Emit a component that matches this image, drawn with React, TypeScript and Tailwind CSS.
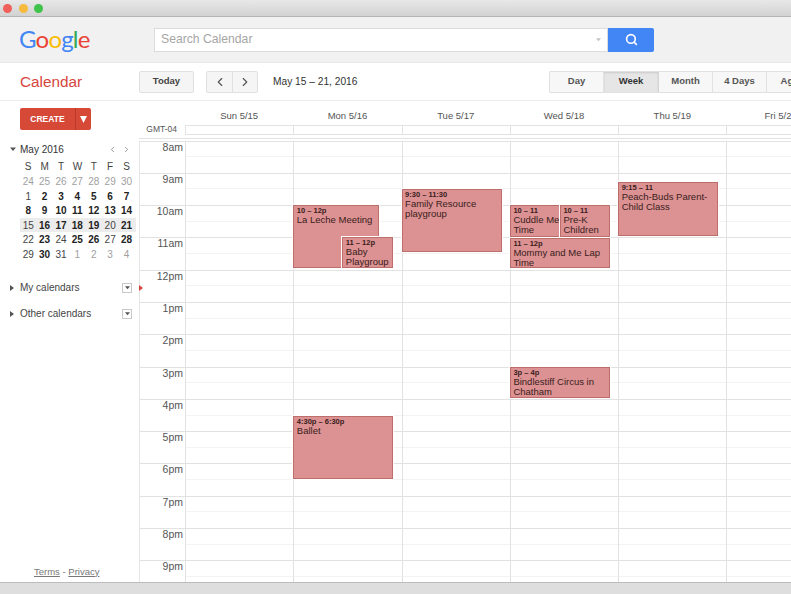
import { ChevronLeft, ChevronRight, Search } from "lucide-react";

const hours = ["8am","9am","10am","11am","12pm","1pm","2pm","3pm","4pm","5pm","6pm","7pm","8pm","9pm"];
const days = ["Sun 5/15","Mon 5/16","Tue 5/17","Wed 5/18","Thu 5/19","Fri 5/20","Sat 5/21"];

type Ev = { time: string; title: string; pos: string };
const events: Ev[][] = [
  [],
  [
    { time: "10 – 12p", title: "La Leche Meeting", pos: "left-[-1px] top-[64.5px] w-[86px] h-[63px]" },
    { time: "11 – 12p", title: "Baby Playgroup", pos: "left-[48px] top-[96.5px] w-[51px] h-[31px]" },
    { time: "4:30p – 6:30p", title: "Ballet", pos: "left-[-1px] top-[275.5px] w-[100px] h-[63px]" },
  ],
  [
    { time: "9:30 – 11:30", title: "Family Resource playgroup", pos: "left-[-1px] top-[48.5px] w-[100px] h-[63px]" },
  ],
  [
    { time: "10 – 11", title: "Cuddle\u00a0Me Time", pos: "left-[-1px] top-[64.5px] w-[50px] h-[32px]" },
    { time: "10 – 11", title: "Pre-K Children", pos: "left-[49px] top-[64.5px] w-[50px] h-[32px]" },
    { time: "11 – 12p", title: "Mommy and Me Lap Time", pos: "left-[-1px] top-[97.5px] w-[100px] h-[30px]" },
    { time: "3p – 4p", title: "Bindlestiff Circus in Chatham", pos: "left-[-1px] top-[226.5px] w-[100px] h-[31px]" },
  ],
  [
    { time: "9:15 – 11", title: "Peach-Buds Parent-Child Class", pos: "left-[-1px] top-[41.5px] w-[100px] h-[54px]" },
  ],
  [],
  [],
];

const mini: { d: number; k: "g" | "n" | "b" }[][] = [
  [24,25,26,27,28,29,30].map((d) => ({ d, k: "g" as const })),
  [1,2,3,4,5,6,7].map((d) => ({ d, k: d === 1 ? ("n" as const) : ("b" as const) })),
  [8,9,10,11,12,13,14].map((d) => ({ d, k: "b" as const })),
  [15,16,17,18,19,20,21].map((d) => ({ d, k: d === 15 || d === 20 ? ("n" as const) : ("b" as const) })),
  [22,23,24,25,26,27,28].map((d) => ({ d, k: [22,24,27].includes(d) ? ("n" as const) : ("b" as const) })),
  [
    { d: 29, k: "n" }, { d: 30, k: "b" }, { d: 31, k: "n" },
    { d: 1, k: "g" }, { d: 2, k: "g" }, { d: 3, k: "g" }, { d: 4, k: "g" },
  ],
];

function Tri({ dir, className }: { dir: "down" | "right"; className: string }) {
  return (
    <svg width="6" height="6" viewBox="0 0 6 6" className={className}>
      <polygon points={dir === "down" ? "0,1.5 6,1.5 3,5" : "1,0 5,3 1,6"} fill="currentColor" />
    </svg>
  );
}

function CalRow({ label }: { label: string }) {
  return (
    <div className="flex items-center h-[26px] pl-[9px] pr-[7px] text-[#444] text-[10px]">
      <Tri dir="right" className="text-[#555] mr-[5px]" />
      <span className="flex-1">{label}</span>
      <span className="w-[10px] h-[10px] border border-[#c8c8c8] flex items-center justify-center">
        <Tri dir="down" className="text-[#555] w-[5px] h-[5px]" />
      </span>
    </div>
  );
}

function ViewBtn({ label, kind }: { label: string; kind?: "active" | "wide" }) {
  if (kind === "active") {
    return (
      <div className="w-[55px] shrink-0 h-full flex items-center justify-center border-r border-[#d4d4d4] bg-[#e6e6e6] font-bold text-[#333] text-[9.5px] shadow-[inset_0_1px_2px_rgba(0,0,0,0.12)]">
        {label}
      </div>
    );
  }
  if (kind === "wide") {
    return (
      <div className="w-[62px] shrink-0 h-full flex items-center justify-center font-bold text-[#555] text-[9.5px]">
        {label}
      </div>
    );
  }
  return (
    <div className="w-[54px] shrink-0 h-full flex items-center justify-center border-r border-[#e2e2e2] font-bold text-[#555] text-[9.5px]">
      {label}
    </div>
  );
}

export default function App() {
  return (
    <div className="w-[791px] h-[594px] overflow-hidden flex flex-col bg-white font-['Liberation_Sans',Arial,sans-serif] text-[#444]">
      {/* window chrome */}
      <div className="h-[17px] shrink-0 flex items-center gap-[6.5px] pl-[3px] bg-gradient-to-b from-[#e8e8e8] to-[#d2d2d2] border-b border-[#b4b4b4]">
        <span className="w-[9px] h-[9px] rounded-full bg-[#f0605a]" />
        <span className="w-[9px] h-[9px] rounded-full bg-[#f6bb3d]" />
        <span className="w-[9px] h-[9px] rounded-full bg-[#3fc34a]" />
      </div>

      {/* search header */}
      <div className="h-[46px] shrink-0 flex items-center bg-[#f1f1f1] border-b border-[#e8e8e8]">
        <div className="w-[154px] pl-[19px] pb-[1px] shrink-0 font-['Lato',sans-serif] text-[24px] leading-none tracking-[-0.8px]">
          <span className="text-[#4285f4]">G</span>
          <span className="text-[#ea4335]">o</span>
          <span className="text-[#fbbc05]">o</span>
          <span className="text-[#4285f4]">g</span>
          <span className="text-[#34a853]">l</span>
          <span className="text-[#ea4335]">e</span>
        </div>
        <div className="w-[454px] h-[24px] flex items-center justify-between pl-[6px] pr-[6px] bg-white border border-[#dcdcdc] text-[12.2px] text-[#a6a6a6]">
          <span>Search Calendar</span>
          <Tri dir="down" className="text-[#c4c4c4] w-[5px] h-[5px]" />
        </div>
        <div className="w-[46px] h-[24px] flex items-center justify-center bg-[#4285f4] rounded-r-[2px] text-white">
          <Search size={13} strokeWidth={3} />
        </div>
      </div>

      {/* toolbar */}
      <div className="h-[38px] shrink-0 flex items-center border-b border-[#ebebeb]">
        <div className="w-[139px] pl-[20px] pt-[1px] shrink-0 text-[15.3px] text-[#d6453d]">Calendar</div>
        <div className="w-[55px] h-[22px] flex items-center justify-center shrink-0 bg-[#f5f5f5] border border-[#e0e0e0] rounded-[2px] text-[9.5px] font-bold text-[#444]">
          Today
        </div>
        <div className="ml-[12px] w-[52px] h-[22px] shrink-0 flex bg-[#f5f5f5] border border-[#e0e0e0] rounded-[2px] text-[#555]">
          <div className="w-[26px] flex items-center justify-center border-r border-[#e0e0e0]">
            <ChevronLeft size={14} strokeWidth={2} />
          </div>
          <div className="flex-1 flex items-center justify-center">
            <ChevronRight size={14} strokeWidth={2} />
          </div>
        </div>
        <div className="ml-[15px] w-[276px] shrink-0 text-[10.2px] text-[#333]">May 15 – 21, 2016</div>
        <div className="h-[22px] flex-1 flex overflow-hidden bg-[#f7f7f7] border border-r-0 border-[#e0e0e0] rounded-l-[2px]">
          <ViewBtn label="Day" />
          <ViewBtn label="Week" kind="active" />
          <ViewBtn label="Month" />
          <ViewBtn label="4 Days" />
          <ViewBtn label="Agenda" kind="wide" />
        </div>
      </div>

      {/* body */}
      <div className="flex-1 min-h-0 flex">
        {/* sidebar */}
        <div className="w-[139px] shrink-0 flex flex-col">
          <div className="mt-[7px] ml-[20px] w-[71px] h-[22px] flex bg-[#d64937] rounded-[2px] text-white">
            <div className="w-[55px] flex items-center justify-center text-[8.5px] font-bold">CREATE</div>
            <div className="flex-1 flex items-center justify-center border-l border-[#b93a2b]">
              <svg width="7" height="7" viewBox="0 0 7 7">
                <polygon points="0,0 7,0 3.5,7" fill="#fff" />
              </svg>
            </div>
          </div>

          <div className="mt-[11px] flex items-center h-[16px] pl-[10px] pr-[8px] text-[10px] text-[#333]">
            <Tri dir="down" className="text-[#555] mr-[4px]" />
            <span className="flex-1">May 2016</span>
            <ChevronLeft size={9} className="text-[#777] mr-[5px]" />
            <ChevronRight size={9} className="text-[#777]" />
          </div>

          <div className="mt-[2px] ml-[20px] w-[116px] text-[10px]">
            <div className="grid grid-cols-[repeat(7,16.4px)] h-[15px] items-center text-center text-[#444]">
              {["S","M","T","W","T","F","S"].map((s, i) => (
                <span key={i}>{s}</span>
              ))}
            </div>
            {mini.map((week, i) => (
              <div
                key={i}
                className={
                  i === 3
                    ? "grid grid-cols-[repeat(7,16.4px)] h-[14.6px] items-center text-center bg-[#ececec]"
                    : "grid grid-cols-[repeat(7,16.4px)] h-[14.6px] items-center text-center"
                }
              >
                {week.map((c, j) => (
                  <span
                    key={j}
                    className={
                      c.k === "g"
                        ? "text-[#a0a0a0]"
                        : c.k === "b"
                          ? "font-bold text-[#222]"
                          : "text-[#444]"
                    }
                  >
                    {c.d}
                  </span>
                ))}
              </div>
            ))}
          </div>

          <div className="mt-[13px]">
            <CalRow label="My calendars" />
            <CalRow label="Other calendars" />
          </div>

          <div className="mt-auto pb-[3px] pl-[34px] text-[9.5px] text-[#777]">
            <span className="underline">Terms</span> - <span className="underline">Privacy</span>
          </div>
        </div>

        {/* calendar */}
        <div className="relative flex-1 min-w-0 overflow-hidden">
          <Tri dir="right" className="absolute left-[-1px] top-[184px] text-[#d6453d]" />
          <div className="grid grid-cols-[46px_repeat(7,108.3px)] h-[24px] items-center">
            <span />
            {days.map((d) => (
              <span key={d} className="text-center text-[9.5px] text-[#555] pt-[7px]">
                {d}
              </span>
            ))}
          </div>
          <div className="grid grid-cols-[46px_repeat(7,108.3px)] h-[10px]">
            <span className="text-right pr-[8px] text-[8.5px] text-[#555] leading-[8px]">GMT-04</span>
            {days.map((d) => (
              <span key={d} className="border border-r-0 border-[#e2e2e2]" />
            ))}
          </div>
          <div className="mt-[3px] grid grid-cols-[46px_repeat(7,108.3px)] border-t border-[#e2e2e2] pt-[1.5px]">
            <div className="border-l border-[#e6e6e6]">
              {hours.map((h) => (
                <div key={h} className="h-[32.3px] border-t border-[#e2e2e2] text-right pr-[2px] text-[10.5px] leading-[10px] text-[#555]">
                  {h}
                </div>
              ))}
            </div>
            {events.map((col, c) => (
              <div key={c} className="relative border-l border-[#e2e2e2]">
                {hours.map((h) => (
                  <div key={h} className="h-[32.3px] border-t border-[#e2e2e2]">
                    <div className="h-1/2 border-b border-[#f3f3f3]" />
                  </div>
                ))}
                {col.map((e) => (
                  <div
                    key={e.title}
                    className={`absolute ${e.pos} overflow-hidden bg-[#dc9292] border border-[#bd6e6a] outline outline-1 outline-white pl-[2.5px] text-[#3a1c1c]`}
                  >
                    <div className="text-[7.5px] font-bold leading-[8px] mt-[1px] whitespace-nowrap">{e.time}</div>
                    <div className="text-[9.5px] leading-[10px]">{e.title}</div>
                  </div>
                ))}
              </div>
            ))}
          </div>
        </div>
      </div>

      {/* bottom bar */}
      <div className="h-[12px] shrink-0 bg-[#dedede] border-t border-[#bcbcbc]" />
    </div>
  );
}
